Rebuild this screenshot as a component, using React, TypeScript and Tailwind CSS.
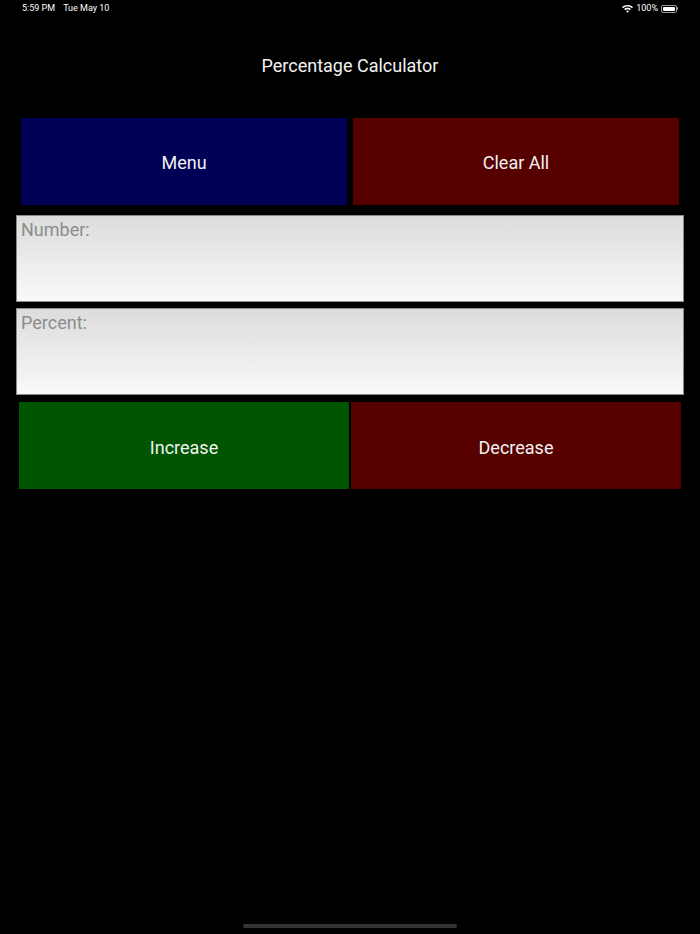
import React from "react";

const font = { fontFamily: "Roboto, 'Liberation Sans', sans-serif" };

const StatusBar = () => (
  <div className="flex h-[17px] items-center justify-between pl-[22px] pr-[22px] text-[9px] text-white">
    <div className="flex gap-[8px]">
      <span>5:59 PM</span>
      <span>Tue May 10</span>
    </div>
    <div className="flex items-center gap-[3px]">
      <svg width="11" height="8" viewBox="0 0 11 8" fill="white">
        <path d="M5.5 0C3.4 0 1.5 0.8 0 2.1l1 1.1C2.2 2.1 3.8 1.5 5.5 1.5s3.3 0.6 4.5 1.7l1-1.1C9.5 0.8 7.6 0 5.5 0z" />
        <path d="M5.5 2.8c-1.3 0-2.5 0.5-3.4 1.3l1 1.1c0.6-0.6 1.5-0.9 2.4-0.9s1.8 0.3 2.4 0.9l1-1.1C8 3.3 6.8 2.8 5.5 2.8z" />
        <path d="M5.5 5.5c-0.6 0-1.1 0.2-1.5 0.6L5.5 7.8 7 6.1C6.6 5.7 6.1 5.5 5.5 5.5z" />
      </svg>
      <span>100%</span>
      <div className="flex items-center">
        <div className="h-[8px] w-[16px] rounded-[2px] border border-white/60 p-[1px]">
          <div className="h-full w-full rounded-[1px] bg-white" />
        </div>
        <div className="h-[3px] w-[1px] rounded-r bg-white/60" />
      </div>
    </div>
  </div>
);

const Field = ({ label }: { label: string }) => (
  <div className="mx-[16px] h-[87px] border border-[#8a8a8a] bg-gradient-to-b from-[#dcdcdc] to-[#f9f9f9] px-[4px] pt-[2px]">
    <span className="text-[18px] leading-[24px] text-[#8c8c8c]">{label}</span>
  </div>
);

export default function App() {
  return (
    <div className="min-h-[934px] w-full bg-black" style={font}>
      <StatusBar />
      <h1 className="mt-[37px] text-center text-[18px] leading-[24px] text-[#f2f2f2]">Percentage Calculator</h1>

      <div className="mt-[40px] flex gap-[6px] px-[21px]">
        <button className="h-[87px] flex-1 bg-[#000055] pt-[2px] text-[18px] text-[#f2f2f2]">Menu</button>
        <button className="h-[87px] flex-1 bg-[#570000] pt-[2px] text-[18px] text-[#f2f2f2]">Clear All</button>
      </div>

      <div className="mt-[10px]">
        <Field label="Number:" />
      </div>
      <div className="mt-[6px]">
        <Field label="Percent:" />
      </div>

      <div className="mt-[7px] flex gap-[2px] px-[19px]">
        <button className="h-[87px] flex-1 bg-[#005500] pt-[3px] text-[18px] text-[#f2f2f2]">Increase</button>
        <button className="h-[87px] flex-1 bg-[#570000] pt-[3px] text-[18px] text-[#f2f2f2]">Decrease</button>
      </div>

      <div className="mt-[435px] flex justify-center">
        <div className="h-[4px] w-[214px] rounded-full bg-[#333333]" />
      </div>
    </div>
  );
}
